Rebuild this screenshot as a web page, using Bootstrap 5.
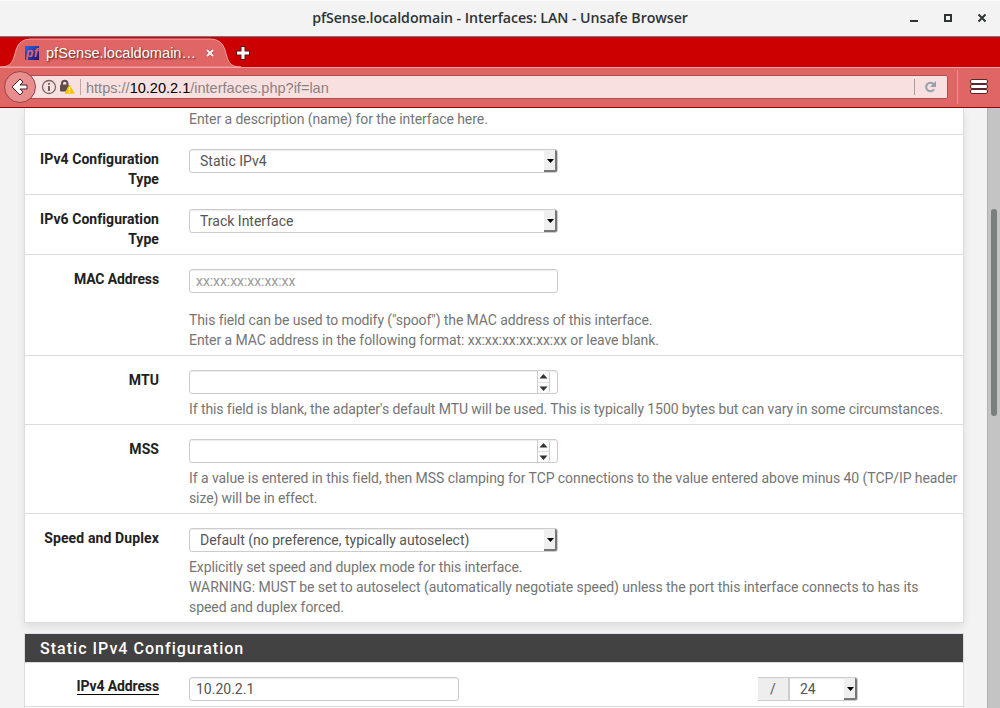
<!DOCTYPE html>
<html lang="en">
<head>
<meta charset="utf-8">
<meta name="viewport" content="width=device-width, initial-scale=1">
<title>pfSense.localdomain - Interfaces: LAN</title>
<link href="https://cdn.jsdelivr.net/npm/bootstrap@5.3.0/dist/css/bootstrap.min.css" rel="stylesheet">
<style>
body{width:1000px;height:708px;overflow:hidden;font:14px/20px Roboto,sans-serif;color:#212121;background:#f3f3f3}
.titlebar{height:36px;background:#f3f3f3;border-top:1px solid #fbfbfb;font:600 14.2px/34px "Open Sans","Noto Sans",sans-serif;color:#2e3436}
.titlebar svg{right:10px;top:10px}
.titlebar .caption{letter-spacing:-.06px}
.tabstrip{height:31px;background:#c00;border-top:1px solid #777}
.tab-label{left:46px;top:5px;font:14.6px/22px "Liberation Sans",sans-serif;color:#fff;text-shadow:1px 1px 2px rgba(60,0,0,.85);white-space:nowrap}
.toolbar{height:41px;background:#e06666;border-top:1px solid #efa0a0;border-bottom:1px solid #900}
.urlbar{margin-left:20px;width:928px;height:24px;margin-top:7px;background:#f8e0e0;border:1px solid #a95050;border-radius:2px;font:14.54px/24px "Liberation Sans",sans-serif;color:#8b8383;padding-left:65px}
.urlbar b{font-weight:400;color:#000}
.page-area{height:600px;overflow:hidden;background:#f3f3f3}
.panel-box{width:940px;margin-left:24px;background:#fff;border:1px solid #dcdcdc;border-top:0}
.shadowed{box-shadow:0 4px 8px rgba(0,0,0,.09)}
.field-row{border-bottom:1px solid #dcdcdc;padding:14px 0 5px}
.field-row:last-child{border-bottom:0}
.field-label{width:134px;font-weight:700;text-align:right;margin-right:30px;flex:none;letter-spacing:.06px}
.field-body{flex:1;min-width:0;color:#757575}
.field-body p{margin:5px 0 0;white-space:nowrap;letter-spacing:-.066px}
.field-body p.spaced{margin-top:17px}
.field-body .tight{letter-spacing:-.104px}
.field-body .snug{letter-spacing:-.085px}
.narrow{letter-spacing:-.12px}
.wide{letter-spacing:.12px}
.ctl{width:369px;height:24px;padding:0 6px;border:1px solid #ccc;border-radius:3px;background:#fff;box-shadow:inset 0 1px 1px rgba(0,0,0,.075);font:14px/22px Roboto,sans-serif;color:#555}
.ctl.pick{padding:0 0 0 10px}
.ctl .drop{width:13px;height:22px;background:#efefef;border-right:2px solid #777;border-bottom:2px solid #777;border-radius:0 2px 2px 0}
.ctl.hint{color:#999;letter-spacing:-.06px}
.spin{width:13px;height:22px;margin-right:1px;border:1px solid #ccc;border-width:0 1px;border-radius:0 3px 3px 0;background:#fcfcfc}
.head{height:29px;background:#424242;color:#fff;border-bottom:1px solid #dcdcdc;padding-left:15px;font:500 16px/29px Roboto,sans-serif;letter-spacing:1.02px}
.slash{width:32px;height:24px;background:#eee;border:1px solid #ccc;border-left:0;border-right-width:2px;line-height:22px;color:#555}
.req{border-bottom:1px solid #000;display:inline-block;line-height:15px;padding-top:1px;vertical-align:top;margin-top:1px}
.scrollbar-track{right:0;top:108px;width:13px;height:600px;background:#c3c4c3;border-left:1px solid #b0b2b0}
.thumb{left:3px;top:101px;width:6px;height:207px;border-radius:3px;background:#7a7e7d}
</style>
</head>
<body class="position-relative">
<header>
  <div class="titlebar position-relative text-center"><span class="caption">pfSense.localdomain - Interfaces: LAN - Unsafe Browser</span>
    <svg class="position-absolute" width="84" height="16" fill="none" stroke="#2e3436"><path d="M4 10h8" stroke-width="2"/><rect x="39" y="4" width="6" height="6" stroke-width="2"/><path d="M72.500 3.500l7 7M79.500 3.500l-7 7" stroke-width="2"/></svg>
  </div>
  <div class="tabstrip position-relative">
    <svg class="d-block" width="270" height="30">
      <path d="M0 30C12 30 13 24 16 13Q19 2 31 2H210Q222 2 225 13C228 24 229 30 241 30Z" fill="#e06666" stroke="#efa0a0"/>
      <defs><linearGradient id="favicon" x2="1" y2="1"><stop stop-color="#2468e8"/><stop offset="1" stop-color="#26106c"/></linearGradient></defs>
      <rect x="25" y="9" width="14" height="14" fill="url(#favicon)"/>
      <text x="26" y="20" font-family="Liberation Sans" font-size="12" font-style="italic" font-weight="700" fill="#e06666" textLength="12">pf</text>
      <path d="M207 13l6 6M213 13l-6 6" stroke="#84353a" stroke-opacity=".5" stroke-width="3.600"/><path d="M207 13l6 6M213 13l-6 6" stroke="#fff" stroke-opacity=".9" stroke-width="2.200"/>
      <path d="M236 16h14M243 9v14" stroke="#5d1418" stroke-width="5"/><path d="M237 16h12M243 10v12" stroke="#fff" stroke-width="3"/>
    </svg>
    <span class="tab-label position-absolute">pfSense.localdomain…</span>
  </div>
  <div class="toolbar position-relative d-flex align-items-start">
    <div class="urlbar flex-shrink-0">https://<b>10.20.2.1</b>/interfaces.php?if=lan</div>
    <svg class="position-absolute start-0 top-0" width="1000" height="39">
      <circle cx="20" cy="19" r="15.500" fill="#e88e8e" stroke="#984444"/>
      <path d="M12 19l8-8 3 3-3 3h7v4h-7l3 3-3 3z" fill="#fff" stroke="#4d2024" stroke-linejoin="round"/>
      <circle cx="49" cy="19" r="6.500" fill="none" stroke="#7a6565" stroke-width="1.300"/>
      <path d="M49 18v5M49 15v1.800" stroke="#665050" stroke-width="1.800"/>
      <path d="M62 17v-1.500a2.700 2.700 0 0 1 5.400 0V17" fill="none" stroke="#5c4c4c" stroke-width="2"/><rect x="60" y="16.500" width="9" height="7" rx="1" fill="#5c4c4c"/>
      <path d="M69.500 17.500l4.200 7.500h-8.400z" fill="#ffbf00" stroke="#ffbf00" stroke-width="1.300" stroke-linejoin="round"/><path d="M69.500 19v3.200M69.500 23.400v1.400" stroke="#fff" stroke-width="1.400"/>
      <path d="M80.500 11v16" stroke="#bba5a5"/><path d="M914.500 11v16" stroke="#aa9a9a"/>
      <path d="M933.800 16.300a4.300 4.300 0 1 0 .3 5" fill="none" stroke="#93a1ac" stroke-width="2"/><path d="M936 13v6h-6z" fill="#93a1ac"/>
      <path d="M957.500 2v34" stroke="#eb8f8f"/>
      <g fill="#fff" stroke="#5d2529"><rect x="970.500" y="11.500" width="17" height="4" rx="1.500"/><rect x="970.500" y="16.500" width="17" height="4" rx="1.500"/><rect x="970.500" y="21.500" width="17" height="4" rx="1.500"/></g>
    </svg>
  </div>
</header>
<main class="page-area">
  <section class="panel-box shadowed">
    <div class="field-row d-flex pt-0"><div class="field-label"></div><div class="field-body"><p style="margin-top:1px">Enter a description (name) for the interface here.</p></div></div>
    <div class="field-row d-flex"><div class="field-label">IPv4 Configuration Type</div><div class="field-body"><div class="ctl pick d-flex justify-content-between">Static IPv4<span class="drop"><svg class="d-block" width="11" height="20"><path d="M3 9h7l-3.500 4z"/></svg></span></div></div></div>
    <div class="field-row d-flex"><div class="field-label">IPv6 Configuration Type</div><div class="field-body"><div class="ctl pick d-flex justify-content-between">Track Interface<span class="drop"><svg class="d-block" width="11" height="20"><path d="M3 9h7l-3.500 4z"/></svg></span></div></div></div>
    <div class="field-row d-flex"><div class="field-label narrow">MAC Address</div><div class="field-body"><div class="ctl hint">xx:xx:xx:xx:xx:xx</div><p class="spaced"><span class="tight">This field can be used to modify ("spoof") the MAC address of this interface.</span><br>Enter a MAC address in the following format: xx:xx:xx:xx:xx:xx or leave blank.</p></div></div>
    <div class="field-row d-flex"><div class="field-label">MTU</div><div class="field-body"><div class="ctl d-flex justify-content-end"><span class="spin"><svg class="d-block" width="11" height="22" fill="#2e3436"><path d="M1.500 7.500L5.500 3l4 4.500zM1.500 15.500h8L5.500 20z"/><path d="M0 11.500h11" stroke="#ddd"/></svg></span></div><p class="snug">If this field is blank, the adapter's default MTU will be used. This is typically 1500 bytes but can vary in some circumstances.</p></div></div>
    <div class="field-row d-flex"><div class="field-label">MSS</div><div class="field-body"><div class="ctl d-flex justify-content-end"><span class="spin"><svg class="d-block" width="11" height="22" fill="#2e3436"><path d="M1.500 7.500L5.500 3l4 4.500zM1.500 15.500h8L5.500 20z"/><path d="M0 11.500h11" stroke="#ddd"/></svg></span></div><p>If a value is entered in this field, then MSS clamping for TCP connections to the value entered above minus 40 (TCP/IP header<br><span class="tight">size) will be in effect.</span></p></div></div>
    <div class="field-row d-flex"><div class="field-label wide">Speed and Duplex</div><div class="field-body"><div class="ctl pick d-flex justify-content-between">Default (no preference, typically autoselect)<span class="drop"><svg class="d-block" width="11" height="20"><path d="M3 9h7l-3.500 4z"/></svg></span></div><p><span class="tight">Explicitly set speed and duplex mode for this interface.</span><br>WARNING: MUST be set to autoselect (automatically negotiate speed) unless the port this interface connects to has its<br>speed and duplex forced.</p></div></div>
  </section>
  <section class="panel-box border-top" style="margin-top:10px">
    <div class="head">Static IPv4 Configuration</div>
    <div class="field-row d-flex"><div class="field-label narrow"><span class="req">IPv4 Address</span></div>
      <div class="field-body d-flex"><div class="ctl" style="width:270px">10.20.2.1</div>
        <div class="d-flex" style="margin-left:299px"><span class="slash text-center">/</span><div class="ctl pick rounded-start-0 border-start-0 d-flex justify-content-between" style="width:68px">24<span class="drop"><svg class="d-block" width="11" height="20"><path d="M3 9h7l-3.500 4z"/></svg></span></div></div>
      </div></div>
    <div class="field-row"></div>
  </section>
</main>
<div class="scrollbar-track position-absolute"><div class="thumb position-absolute"></div></div>
<script src="https://cdn.jsdelivr.net/npm/bootstrap@5.3.0/dist/js/bootstrap.bundle.min.js"></script>
</body>
</html>
